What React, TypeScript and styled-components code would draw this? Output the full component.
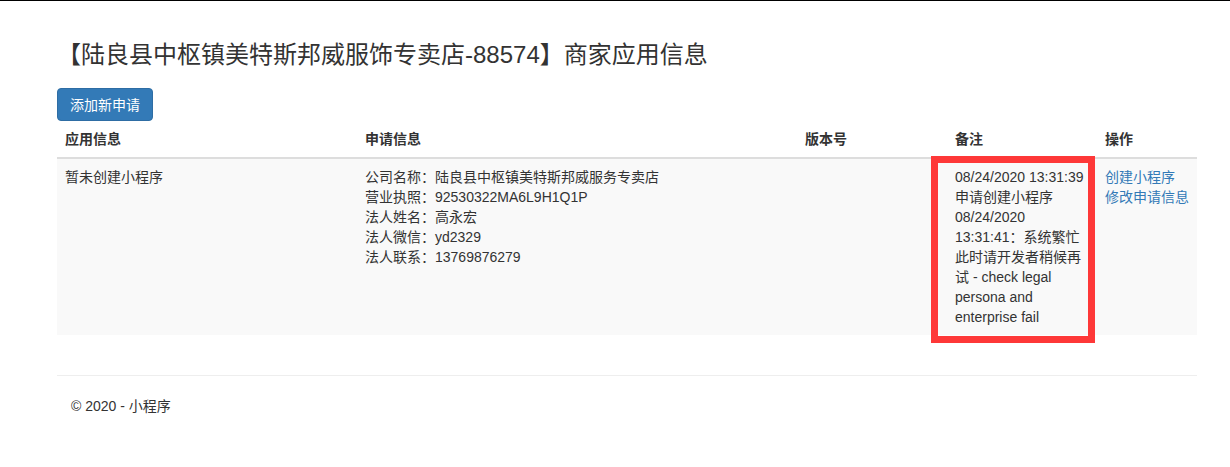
import styled, { createGlobalStyle } from 'styled-components';

const GlobalStyle = createGlobalStyle`
    *, *::before, *::after {
        box-sizing: border-box;
    }
    html, body {
        margin: 0;
        padding: 0;
        background: #fff;
    }
    body {
        font-family: "Liberation Sans", Arial, "Noto Sans CJK SC", sans-serif;
        font-size: 14px;
        line-height: 20px;
        color: #333;
        border-top: 1px solid #000;
    }
`;

const Page = styled.div`
    padding: 0 33px 0 57px;
`;

const Title = styled.h3`
    margin: 40px 0 0;
    font-size: 24px;
    font-weight: 400;
    line-height: 27px;
`;

const PrimaryButton = styled.button`
    display: block;
    margin-top: 20px;
    height: 33px;
    padding: 6px 12px;
    font-family: inherit;
    font-size: 14px;
    line-height: 20px;
    color: #fff;
    background: #337ab7;
    border: 1px solid #2e6da4;
    border-radius: 4px;
`;

const Table = styled.table`
    width: 100%;
    table-layout: fixed;
    border-collapse: collapse;
    border-spacing: 0;
    margin-bottom: 20px;
`;

const Th = styled.th<{ $w: number }>`
    width: ${p => p.$w}px;
    padding: 8px;
    text-align: left;
    font-weight: bold;
    vertical-align: bottom;
    border-bottom: 2px solid #ddd;
`;

const Row = styled.tr`
    background: #f9f9f9;
`;

const Td = styled.td`
    padding: 8px;
    vertical-align: top;
    position: relative;
`;

const Line = styled.div``;

const Link = styled.a`
    display: block;
    color: #337ab7;
    text-decoration: none;
`;

const Mark = styled.div`
    position: absolute;
    left: -16px;
    top: -3px;
    width: 164px;
    height: 187px;
    border: 7px solid #fe3838;
    pointer-events: none;
`;

const Rule = styled.hr`
    margin: 40px 0 20px;
    border: 0;
    border-top: 1px solid #eee;
`;

const Footer = styled.footer`
    padding-left: 14px;
`;

const applyInfo = [
    '公司名称：陆良县中枢镇美特斯邦威服务专卖店',
    '营业执照：92530322MA6L9H1Q1P',
    '法人姓名：高永宏',
    '法人微信：yd2329',
    '法人联系：13769876279',
];

export default function App() {
    return (
        <>
            <GlobalStyle />
            <Page>
                <Title>【陆良县中枢镇美特斯邦威服饰专卖店-88574】商家应用信息</Title>
                <PrimaryButton>添加新申请</PrimaryButton>
                <Table>
                    <thead>
                        <tr>
                            <Th $w={300}>应用信息</Th>
                            <Th $w={440}>申请信息</Th>
                            <Th $w={150}>版本号</Th>
                            <Th $w={150}>备注</Th>
                            <Th $w={100}>操作</Th>
                        </tr>
                    </thead>
                    <tbody>
                        <Row>
                            <Td>暂未创建小程序</Td>
                            <Td>
                                {applyInfo.map((t, i) => <Line key={i}>{t}</Line>)}
                            </Td>
                            <Td></Td>
                            <Td>
                                08/24/2020 13:31:39 申请创建小程序 08/24/2020 13:31:41：系统繁忙此时请开发者稍候再试 - check legal persona and enterprise fail
                                <Mark />
                            </Td>
                            <Td>
                                <Link href="#">创建小程序</Link>
                                <Link href="#">修改申请信息</Link>
                            </Td>
                        </Row>
                    </tbody>
                </Table>
                <Rule />
                <Footer>© 2020 - 小程序</Footer>
            </Page>
        </>
    );
}
